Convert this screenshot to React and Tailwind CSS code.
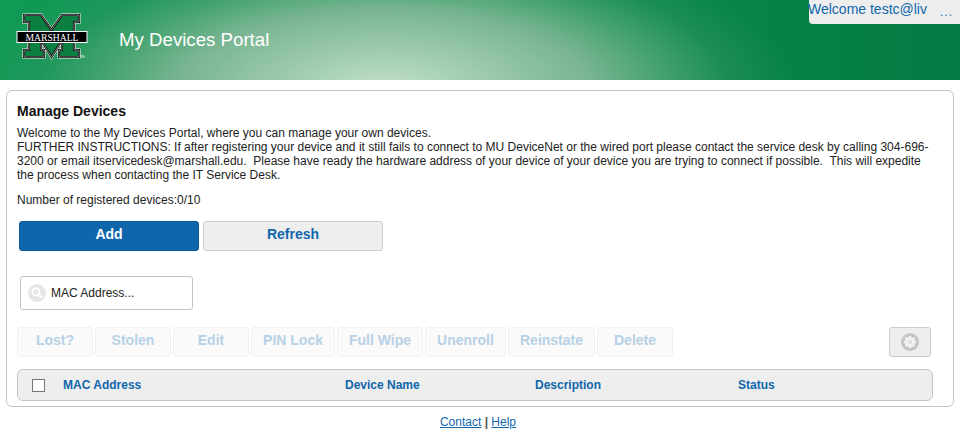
import React from "react";

const tools = [
  ["Lost?", "w-[76px]"],
  ["Stolen", "w-[76px]"],
  ["Edit", "w-[76px]"],
  ["PIN Lock", "w-[84px]"],
  ["Full Wipe", "w-[86px]"],
  ["Unenroll", "w-[81px]"],
  ["Reinstate", "w-[87px]"],
  ["Delete", "w-[76px]"],
];

function Logo() {
  const m = "M8 2H25L35.5 17L46 2H63V9H58V37H63V44H43V37H46V27L35.5 44L25 27V37H28V44H8V37H13V9H8Z";
  return (
    <svg width="73" height="48" viewBox="0 0 73 48" className="block">
      <path d={m} fill="#0b7f41" stroke="#fff" strokeWidth="3.2" strokeLinejoin="miter" />
      <path d={m} fill="#0b7f41" stroke="#000" strokeWidth="2.2" strokeLinejoin="miter" />
      <path d={m} fill="none" stroke="#fff" strokeWidth="0.5" />
      <rect x="1" y="18.5" width="70" height="11" fill="#000" stroke="#fff" strokeWidth="1" />
      <text x="36" y="28" textAnchor="middle" fontFamily="'Liberation Serif', serif" fontSize="10" fill="#fff" textLength="53" lengthAdjust="spacingAndGlyphs">MARSHALL</text>
      <text x="64" y="45" fontFamily="'Liberation Sans', sans-serif" fontSize="3" fill="#fff">TM</text>
    </svg>
  );
}

export default function App() {
  return (
    <div className="min-h-[443px] bg-white font-['Liberation_Sans',Arial,sans-serif] text-[12px] leading-[14px] text-[#222]">
      <header className="relative flex h-20 items-center bg-[radial-gradient(ellipse_410px_155px_at_385px_88px,#c4e0cb_0%,#a9d2b4_17%,#79b592_50%,rgba(79,166,116,0.85)_68%,rgba(50,150,100,0.45)_84%,rgba(10,135,74,0)_100%),linear-gradient(90deg,#109a55_0%,#0b8f4e_50%,#047a42_100%)]">
        <div className="ml-[16px] mt-[-6px] w-[73px]">
          <Logo />
        </div>
        <h1 className="ml-[30px] text-[18.67px] font-normal leading-[22px] text-white">My Devices Portal</h1>
        <div className="absolute right-0 top-0 flex h-6 w-[151px] rounded-bl-[4px] bg-[#eeeeee]">
          <span className="ml-[-1px] mt-px whitespace-nowrap text-[14px] leading-[16px] text-[#1066ab]">Welcome testc@liv</span>
          <span className="ml-[13px] mt-[5px] text-[12px] tracking-[1px] text-[#1066ab]">...</span>
        </div>
      </header>

      <main className="mx-[6px] mt-[10px] h-[317px] rounded-[6px] border border-[#c4c4c4] px-[10px] pt-[12px]">
        <h2 className="text-[14px] font-bold leading-[17px] text-[#111]">Manage Devices</h2>
        <p className="mt-[6px] w-[916px]">
          Welcome to the My Devices Portal, where you can manage your own devices.
          <br />
          FURTHER INSTRUCTIONS: If after registering your device and it still fails to connect to MU DeviceNet or the wired port please contact the service desk by calling 304-696-3200 or email itservicedesk@marshall.edu.&nbsp; Please have ready the hardware address of your device of your device you are trying to connect if possible.&nbsp; This will expedite the process when contacting the IT Service Desk.
        </p>
        <p className="mt-[11px]">Number of registered devices:0/10</p>

        <div className="ml-[2px] mt-[14px] flex gap-1">
          <button className="h-[30px] w-[180px] rounded-[3px] border border-[#0d5c9b] bg-[#1066ab] pb-[4px] text-[14px] font-bold text-white">Add</button>
          <button className="h-[30px] w-[180px] rounded-[3px] border border-[#cccccc] bg-[#eeeeee] pb-[4px] text-[14px] font-bold text-[#1066ab]">Refresh</button>
        </div>

        <div className="ml-[3px] mt-[25px] flex h-[34px] w-[173px] items-center rounded-[3px] border border-[#c4c4c4] bg-white pl-[7px]">
          <svg width="18" height="18" viewBox="0 0 18 18" className="shrink-0">
            <circle cx="9" cy="9" r="9" fill="#e6e6e6" />
            <circle cx="8" cy="8" r="3.6" fill="none" stroke="#fff" strokeWidth="1.8" />
            <path d="M10.8 10.8L14 14" stroke="#fff" strokeWidth="2.2" />
          </svg>
          <span className="ml-[5px] text-[#222]">MAC Address...</span>
        </div>

        <div className="mt-[17px] flex h-[30px] w-[914px] items-stretch">
          <div className="flex gap-[2px]">
            {tools.map(([label, w]) => (
              <button key={label} className={`${w} rounded-[3px] border border-[#f1f1f1] bg-[#fafafa] pb-[4px] text-[14px] font-bold text-[#b7d1e6]`}>{label}</button>
            ))}
          </div>
          <button className="ml-auto flex w-[42px] items-center justify-center rounded-[3px] border border-[#cccccc] bg-[#eeeeee]">
            <svg width="18" height="18" viewBox="0 0 18 18">
              <circle cx="9" cy="9" r="9" fill="#c4c4c4" />
              <g fill="#f2f2f2">
                <circle cx="9" cy="9" r="4.6" />
                <rect x="7.6" y="2.8" width="2.8" height="12.4" rx="0.8" />
                <rect x="7.6" y="2.8" width="2.8" height="12.4" rx="0.8" transform="rotate(45 9 9)" />
                <rect x="7.6" y="2.8" width="2.8" height="12.4" rx="0.8" transform="rotate(90 9 9)" />
                <rect x="7.6" y="2.8" width="2.8" height="12.4" rx="0.8" transform="rotate(135 9 9)" />
              </g>
              <circle cx="9" cy="9" r="1.9" fill="#dcdcdc" />
            </svg>
          </button>
        </div>

        <div className="mt-[12px] grid h-[32px] w-[916px] grid-cols-[45px_282px_190px_203px_1fr] items-center rounded-[6px] border border-[#c4c4c4] bg-[#eeeeee] text-[12px] font-bold text-[#1066ab]">
          <span className="ml-[14px] block h-[13px] w-[13px] border border-[#767676] bg-white" />
          <span>MAC Address</span>
          <span>Device Name</span>
          <span>Description</span>
          <span>Status</span>
        </div>
      </main>

      <footer className="mt-[8px] pr-[4px] text-center text-[12px] leading-[14px] text-[#555]">
        <a className="text-[#1066ab] underline">Contact</a>
        <b> | </b>
        <a className="text-[#1066ab] underline">Help</a>
      </footer>
    </div>
  );
}
